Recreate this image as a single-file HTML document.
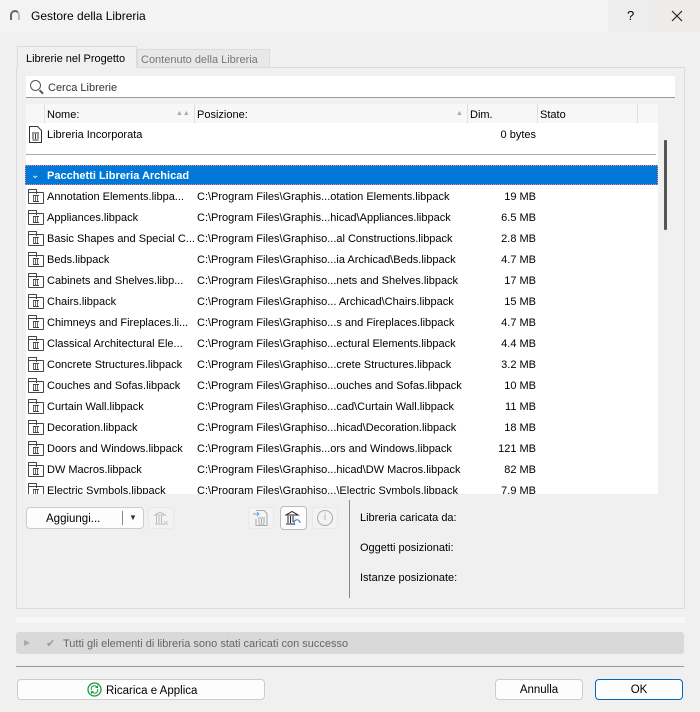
<!DOCTYPE html>
<html><head><meta charset="utf-8"><style>
*{margin:0;padding:0;box-sizing:border-box}
body{width:700px;height:712px;background:#f0f0f0;font-family:"Liberation Sans",sans-serif;font-size:11px;color:#000;position:relative;overflow:hidden}
.a{position:absolute;white-space:nowrap}
.row{position:absolute;left:26px;width:632px;height:21px;line-height:21px}
.row span{top:1px}
.row .ic{position:absolute;left:2px;top:6px;width:16px;height:12px;border:1px solid #444;border-radius:1px;background:#fff}
.row .ic:before{content:"";position:absolute;left:-1px;top:-4px;width:7px;height:4px;border:1px solid #444;border-bottom:none;border-radius:1px 1px 0 0}
.row .ic:after{content:"";position:absolute;left:4px;top:2px;width:6px;height:5px;border-top:1px solid #444;border-bottom:1px solid #444;background:repeating-linear-gradient(90deg,#666 0 1px,#fff 1px 2px)}
.n{position:absolute;left:21px}.p{position:absolute;left:171px}.d{position:absolute;right:122px}
.btn{position:absolute;background:#fdfdfd;border:1px solid #ccc;border-radius:4px;text-align:center;font-size:11.5px}
</style></head><body>
<div class="a" style="left:0;top:0;width:700px;height:32px;background:#f3f3f3"></div>
<div class="a" style="left:10px;top:10px;width:10px;height:10px;border:2px solid #666;border-bottom:none;border-right-color:#bbb;border-radius:8px 8px 0 0"></div>
<div class="a" style="left:31px;top:9px;font-size:12px">Gestore della Libreria</div>
<div class="a" style="left:608px;top:0;width:46px;height:32px;background:#ededed"></div>
<div class="a" style="left:654px;top:0;width:46px;height:32px;background:#efebe9"></div>
<div class="a" style="left:627px;top:8px;font-size:13px">?</div>
<svg class="a" style="left:671px;top:10px" width="12" height="12"><path d="M1 1L11 11M11 1L1 11" stroke="#222" stroke-width="1.2"/></svg>

<div class="a" style="left:16px;top:67px;width:669px;height:542px;border:1px solid #dcdcdc;background:#f0f0f0"></div>
<div class="a" style="left:17px;top:46px;width:120px;height:22px;background:#f0f0f0;border:1px solid #dcdcdc;border-bottom:none;padding:6px 0 0 8px">Librerie nel Progetto</div>
<div class="a" style="left:137px;top:49px;width:133px;height:19px;background:#e8e8e8;border:1px solid #dcdcdc;padding:4px 0 0 3px;color:#777">Contenuto della Libreria</div>

<div class="a" style="left:26px;top:76px;width:649px;height:22px;background:#fff;border-bottom:1px solid #999"></div>
<div class="a" style="left:30px;top:80px;width:11px;height:11px;border:1.3px solid #555;border-radius:50%"></div>
<div class="a" style="left:39px;top:91px;width:5px;height:1.5px;background:#555;transform:rotate(45deg)"></div>
<div class="a" style="left:48px;top:82px;color:#333">Cerca Librerie</div>

<div class="a" style="left:26px;top:104px;width:632px;height:390px;background:#fff"></div>
<div class="a" style="left:26px;top:104px;width:632px;height:19px;background:#f7f7f7"></div>
<div class="a" style="left:44px;top:104px;width:1px;height:19px;background:#e0e0e0"></div>
<div class="a" style="left:194px;top:104px;width:1px;height:19px;background:#e0e0e0"></div>
<div class="a" style="left:467px;top:104px;width:1px;height:19px;background:#e0e0e0"></div>
<div class="a" style="left:537px;top:104px;width:1px;height:19px;background:#e0e0e0"></div>
<div class="a" style="left:637px;top:104px;width:1px;height:19px;background:#e0e0e0"></div>
<div class="a" style="left:47px;top:109px">Nome:</div>
<div class="a" style="left:176px;top:110px;font-size:7px;color:#aaa">▲▲</div>
<div class="a" style="left:197px;top:109px">Posizione:</div>
<div class="a" style="left:456px;top:110px;font-size:7px;color:#aaa">▲</div>
<div class="a" style="left:470px;top:109px">Dim.</div>
<div class="a" style="left:540px;top:109px">Stato</div>
<div class="a" style="left:658px;top:104px;width:17px;height:390px;background:#f0f0f0"></div>
<div class="a" style="left:664px;top:140px;width:3px;height:90px;background:#555;border-radius:1px"></div>

<div class="row" style="top:124px"><svg style="position:absolute;left:3px;top:2px" width="13" height="17"><path d="M0.5 0.5H8.5L12.5 4.5V16.5H0.5Z" fill="#fff" stroke="#333"/><path d="M3 7H10M3.5 14H9.5M4 8V13M6.5 8V13M9 8V13" stroke="#333"/></svg><span class="n">Libreria Incorporata</span><span class="d">0 bytes</span></div>
<div class="a" style="left:26px;top:154px;width:630px;height:1px;background:#aaa"></div>
<div class="a" style="left:25px;top:165px;width:633px;height:20px;background:#0078d7;border:1px dotted #e88"></div>
<div class="a" style="left:31px;top:170px;color:#fff;font-size:10px">⌄</div>
<div class="a" style="left:47px;top:170px;color:#fff;font-weight:bold">Pacchetti Libreria Archicad</div>

<div class="row" style="top:186px"><i class="ic"></i><span class="n">Annotation Elements.libpa...</span><span class="p">C:\Program Files\Graphis...otation Elements.libpack</span><span class="d">19 MB</span></div>
<div class="row" style="top:207px"><i class="ic"></i><span class="n">Appliances.libpack</span><span class="p">C:\Program Files\Graphis...hicad\Appliances.libpack</span><span class="d">6.5 MB</span></div>
<div class="row" style="top:228px"><i class="ic"></i><span class="n">Basic Shapes and Special C...</span><span class="p">C:\Program Files\Graphiso...al Constructions.libpack</span><span class="d">2.8 MB</span></div>
<div class="row" style="top:249px"><i class="ic"></i><span class="n">Beds.libpack</span><span class="p">C:\Program Files\Graphiso...ia Archicad\Beds.libpack</span><span class="d">4.7 MB</span></div>
<div class="row" style="top:270px"><i class="ic"></i><span class="n">Cabinets and Shelves.libp...</span><span class="p">C:\Program Files\Graphiso...nets and Shelves.libpack</span><span class="d">17 MB</span></div>
<div class="row" style="top:291px"><i class="ic"></i><span class="n">Chairs.libpack</span><span class="p">C:\Program Files\Graphiso... Archicad\Chairs.libpack</span><span class="d">15 MB</span></div>
<div class="row" style="top:312px"><i class="ic"></i><span class="n">Chimneys and Fireplaces.li...</span><span class="p">C:\Program Files\Graphiso...s and Fireplaces.libpack</span><span class="d">4.7 MB</span></div>
<div class="row" style="top:333px"><i class="ic"></i><span class="n">Classical Architectural Ele...</span><span class="p">C:\Program Files\Graphiso...ectural Elements.libpack</span><span class="d">4.4 MB</span></div>
<div class="row" style="top:354px"><i class="ic"></i><span class="n">Concrete Structures.libpack</span><span class="p">C:\Program Files\Graphiso...crete Structures.libpack</span><span class="d">3.2 MB</span></div>
<div class="row" style="top:375px"><i class="ic"></i><span class="n">Couches and Sofas.libpack</span><span class="p">C:\Program Files\Graphiso...ouches and Sofas.libpack</span><span class="d">10 MB</span></div>
<div class="row" style="top:396px"><i class="ic"></i><span class="n">Curtain Wall.libpack</span><span class="p">C:\Program Files\Graphiso...cad\Curtain Wall.libpack</span><span class="d">11 MB</span></div>
<div class="row" style="top:417px"><i class="ic"></i><span class="n">Decoration.libpack</span><span class="p">C:\Program Files\Graphiso...hicad\Decoration.libpack</span><span class="d">18 MB</span></div>
<div class="row" style="top:438px"><i class="ic"></i><span class="n">Doors and Windows.libpack</span><span class="p">C:\Program Files\Graphis...ors and Windows.libpack</span><span class="d">121 MB</span></div>
<div class="row" style="top:459px"><i class="ic"></i><span class="n">DW Macros.libpack</span><span class="p">C:\Program Files\Graphiso...hicad\DW Macros.libpack</span><span class="d">82 MB</span></div>
<div class="row" style="top:480px;height:14px;overflow:hidden"><i class="ic"></i><span class="n">Electric Symbols.libpack</span><span class="p">C:\Program Files\Graphiso...\Electric Symbols.libpack</span><span class="d">7.9 MB</span></div>

<div class="btn" style="left:26px;top:507px;width:118px;height:22px"></div>
<div class="a" style="left:46px;top:513px;font-size:11.5px">Aggiungi...</div>
<div class="a" style="left:122px;top:511px;width:1px;height:14px;background:#888"></div>
<div class="a" style="left:129px;top:513px;font-size:8px;color:#333">▼</div>
<div class="btn" style="left:148px;top:507px;width:26px;height:22px;background:#f3f3f3;border-color:#e8e8e8"></div>
<svg class="a" style="left:153px;top:510px" width="16" height="16"><path d="M2 5L7 2L12 5ZM2 14H12M3.5 6V13M6 6V13M8.5 6V13" stroke="#bbb" fill="none"/><path d="M11 11L15 15M15 11L11 15" stroke="#b8d0ea"/></svg>
<div class="btn" style="left:248px;top:507px;width:26px;height:22px;background:#f3f3f3;border-color:#e8e8e8"></div>
<svg class="a" style="left:253px;top:509px" width="16" height="18"><path d="M3 1.5H11L14 4.5V16.5H3V10" stroke="#aaa" fill="none"/><path d="M5 9H12M5.5 15H11.5M6 10V14M8.5 10V14M11 10V14" stroke="#aaa"/><path d="M0 5H6M4 3L6 5L4 7" stroke="#6aa6e0" fill="none"/></svg>
<div class="btn" style="left:280px;top:506px;width:27px;height:24px;border-color:#bbb"></div>
<svg class="a" style="left:285px;top:510px" width="17" height="17"><path d="M1 5L7 1.5L13 5ZM1 14H9M3 6V13M5.5 6V13M8 6V12" stroke="#222" fill="none"/><path d="M10 15A3 3 0 1 1 15 13" stroke="#2b7cd3" fill="none"/></svg>
<div class="btn" style="left:312px;top:507px;width:26px;height:22px;background:#f3f3f3;border-color:#e8e8e8"></div>
<div class="a" style="left:317px;top:510px;width:16px;height:16px;border:1px solid #aaa;border-radius:50%;color:#aaa;text-align:center;line-height:14px;font-size:10px">i</div>
<div class="a" style="left:349px;top:500px;width:1px;height:98px;background:#888"></div>
<div class="a" style="left:360px;top:512px">Libreria caricata da:</div>
<div class="a" style="left:360px;top:542px">Oggetti posizionati:</div>
<div class="a" style="left:360px;top:572px">Istanze posizionate:</div>

<div class="a" style="left:16px;top:617px;width:669px;height:6px;background:#f7f7f7"></div>
<div class="a" style="left:16px;top:632px;width:668px;height:22px;background:#d9d9d9;border-radius:3px"></div>
<div class="a" style="left:24px;top:638px;font-size:8px;color:#aaa">▶</div>
<div class="a" style="left:46px;top:637px;color:#999">✔</div>
<div class="a" style="left:63px;top:638px;color:#666">Tutti gli elementi di libreria sono stati caricati con successo</div>
<div class="a" style="left:16px;top:666px;width:668px;height:1px;background:#999"></div>

<div class="btn" style="left:17px;top:679px;width:248px;height:21px"></div>
<svg class="a" style="left:87px;top:682px" width="15" height="15"><circle cx="7.5" cy="7.5" r="6.5" fill="none" stroke="#1a9a3a" stroke-width="1.3"/><path d="M4.5 8A3 3 0 0 1 10 5.5M10.5 7A3 3 0 0 1 5 9.5M8.5 5.5H10.5V3.5M6.5 9.5H4.5V11.5" stroke="#1a9a3a" fill="none"/></svg>
<div class="a" style="left:106px;top:685px;font-size:11.5px">Ricarica e Applica</div>
<div class="btn" style="left:495px;top:679px;width:88px;height:21px;line-height:21px">Annulla</div>
<div class="btn" style="left:595px;top:679px;width:88px;height:21px;line-height:21px;border-color:#0067c0">OK</div>
</body></html>
